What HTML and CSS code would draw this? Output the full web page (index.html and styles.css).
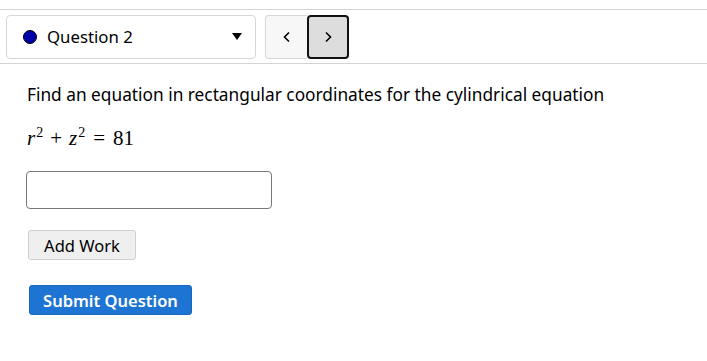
FILE: index.html
```html
<!DOCTYPE html>
<html>
<head>
<meta charset="utf-8">
<link rel="stylesheet" href="styles.css">
</head>
<body>
<div class="nav">
  <div class="select">
    <span class="dot"></span>
    <span class="qlabel">Question 2</span>
    <span class="caret"></span>
  </div>
  <div class="pager">
    <button class="pbtn prev" type="button"><svg width="10" height="12" viewBox="0 0 10 12"><path d="M7 1.5 L2.5 6 L7 10.5" fill="none" stroke="#000" stroke-width="1.6"/></svg></button>
    <button class="pbtn next" type="button"><svg width="10" height="12" viewBox="0 0 10 12"><path d="M3 1.5 L7.5 6 L3 10.5" fill="none" stroke="#000" stroke-width="1.6"/></svg></button>
  </div>
</div>
<div class="content">
  <p class="prompt">Find an equation in rectangular coordinates for the cylindrical equation</p>
  <div class="math"><i>r</i><sup>2</sup><span class="op">+</span><i>z</i><sup>2</sup><span class="op eq">=</span>81</div>
  <input class="answer" type="text">
  <div class="row"><button class="btn work" type="button">Add Work</button></div>
  <div class="row"><button class="btn submit" type="button">Submit Question</button></div>
</div>
</body>
</html>
```
FILE: styles.css
```css
body {
  margin: 0;
  font-family: "Noto Sans", sans-serif;
  font-size: 17px;
  color: #000;
  background: #fff;
}
.nav {
  margin-top: 9px;
  border-top: 1px solid #d4d4d4;
  border-bottom: 1px solid #d4d4d4;
  padding: 5px 6px 4px;
  display: flex;
  align-items: center;
  gap: 9px;
}
.select {
  width: 250px;
  height: 44px;
  box-sizing: border-box;
  border: 1px solid #d6d6d6;
  border-radius: 4px;
  display: flex;
  align-items: center;
  padding: 0 12px 1px 16px;
}
.dot {
  width: 14px;
  height: 14px;
  box-sizing: border-box;
  border-radius: 50%;
  background: #0000a8;
  border: 1px solid #000;
  margin-right: 10px;
}
.qlabel {
  flex: 1;
  font-size: 16.8px;
}
.caret {
  width: 0;
  height: 0;
  border-left: 5px solid transparent;
  border-right: 5px solid transparent;
  border-top: 7px solid #000;
  margin-right: 1px;
}
.pager {
  display: flex;
  height: 44px;
}
.pbtn {
  height: 44px;
  box-sizing: border-box;
  display: flex;
  align-items: center;
  justify-content: center;
  padding: 0;
  font: inherit;
}
.prev {
  width: 42px;
  background: #f7f7f7;
  border: 1px solid #d6d6d6;
  border-right: none;
  border-radius: 4px 0 0 4px;
}
.next {
  width: 42px;
  background: #dddddd;
  border: 2px solid #111;
  border-radius: 4px;
}
.content {
  padding: 0 27px;
}
.prompt {
  margin: 20px 0 0;
  font-size: 17.3px;
  line-height: 22px;
  white-space: nowrap;
}
.math {
  margin-top: 20px;
  font-family: "Liberation Serif", "DejaVu Serif", serif;
  font-size: 21px;
  line-height: 24px;
  height: 24px;
}
.math i {
  font-style: italic;
}
.math sup {
  font-size: 14px;
  vertical-align: 8px;
  line-height: 0;
  margin-left: 1px;
}
.math .op {
  margin: 0 7px;
}
.math .eq {
  margin: 0 8px;
}
.answer {
  display: block;
  margin: 21px 0 0 -1px;
  width: 246px;
  height: 38px;
  box-sizing: border-box;
  border: 1px solid #777;
  border-radius: 4px;
  font: inherit;
}
.row {
  margin-top: 21px;
}
.row + .row {
  margin-top: 25px;
}
.btn {
  font: inherit;
  font-size: 16.5px;
  height: 30px;
  box-sizing: border-box;
  border-radius: 3px;
  padding: 0;
  display: block;
  white-space: nowrap;
  text-align: center;
}
.work {
  margin-left: 1px;
  width: 108px;
  background: #efefef;
  border: 1px solid #cfcfcf;
  color: #000;
}
.submit {
  margin-left: 2px;
  width: 163px;
  background: #1e74d3;
  border: 1px solid #1a66bb;
  color: #fff;
  font-weight: 600;
}
```
